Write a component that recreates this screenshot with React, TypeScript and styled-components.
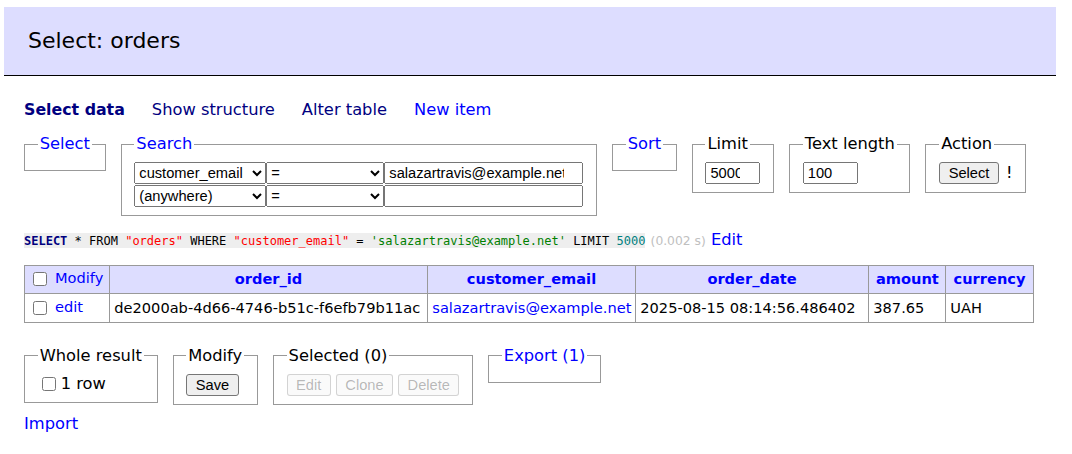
import React from "react";
import styled, { createGlobalStyle } from "styled-components";

const Global = createGlobalStyle`
  html, body { margin: 0; padding: 0; background: #fff; }
  body {
    font-family: "DejaVu Sans", Verdana, sans-serif;
    font-size: 16.3px;
    line-height: 20px;
    color: #000;
  }
`;

const Page = styled.div`
  padding: 7px 16px 20px 24px;
`;

const Title = styled.h2`
  margin: 0 0 24px -20px;
  padding: 19px 24px;
  font-size: 22px;
  line-height: 30px;
  font-weight: normal;
  color: #000;
  background: #ddf;
  border-bottom: 1px solid #000;
`;

const Links = styled.nav`
  display: flex;
  gap: 27px;
  line-height: 20px;
`;

const NavLink = styled.a<{ $active?: boolean; $visited?: boolean }>`
  color: ${(p) => (p.$visited ? "#000080" : "#0000ff")};
  font-weight: ${(p) => (p.$active ? "bold" : "normal")};
  font-size: ${(p) => (p.$active ? "15.8px" : "16.3px")};
  text-decoration: none;
  white-space: nowrap;
`;

const FieldRow = styled.div<{ $top: number }>`
  display: flex;
  align-items: flex-start;
  gap: 15px;
  margin-top: ${(p) => p.$top}px;
`;

const Box = styled.fieldset`
  margin: 0;
  padding: 7.9px 12.7px;
  border: 1px solid #999;
  line-height: 20px;
`;

const Legend = styled.legend<{ $link?: boolean }>`
  padding: 0 2px;
  color: ${(p) => (p.$link ? "#0000ff" : "#000")};
  line-height: 20px;
`;

const SearchGrid = styled.div`
  display: grid;
  grid-template-columns: 132px 118px 199px;
  row-gap: 1px;
`;

const controlFont = `font-family: "Liberation Sans", Arial, sans-serif; font-size: 14.67px;`;

const Select = styled.select`
  ${controlFont}
  box-sizing: border-box;
  width: 100%;
  height: 22px;
  margin: 0;
  color: #000;
`;

const TextInput = styled.input<{ $w?: number }>`
  ${controlFont}
  box-sizing: border-box;
  width: ${(p) => (p.$w ? `${p.$w}px` : "100%")};
  height: 22px;
  margin: 0;
  padding: 1px 3px;
  color: #000;
`;

const Inline = styled.div<{ $gap?: number }>`
  display: flex;
  align-items: center;
  gap: ${(p) => p.$gap ?? 0}px;
  white-space: nowrap;
`;

const Button = styled.button`
  ${controlFont}
  height: 22px;
  padding: 0 8.5px;
  margin: 0;
  color: #000;
  background: #efefef;
  border: 1px solid #767676;
  border-radius: 3px;
  &:disabled {
    color: rgba(16, 16, 16, 0.3);
    background: rgba(239, 239, 239, 0.3);
    border-color: rgba(118, 118, 118, 0.3);
  }
`;

const Bang = styled.span`
  color: #000;
`;

const SqlLine = styled.p`
  margin: 14px 0 0;
  line-height: 20px;
  white-space: nowrap;
`;

const Code = styled.code`
  font-family: "DejaVu Sans Mono", monospace;
  font-size: 12px;
  background: #eee;
  padding: 0.5px 0;
`;

const Tok = styled.span<{ $t: "kw" | "id" | "str" | "num" }>`
  color: ${(p) =>
    p.$t === "kw" ? "#000080" : p.$t === "id" ? "#ff0000" : p.$t === "str" ? "#008000" : "#007f7f"};
  font-weight: ${(p) => (p.$t === "kw" ? "bold" : "normal")};
`;

const Time = styled.span`
  color: #c0c0c0;
  font-size: 12.3px;
`;

const Link = styled.a`
  color: #0000ff;
  text-decoration: none;
`;

const Table = styled.table`
  margin-top: 14px;
  width: 1009px;
  table-layout: fixed;
  border-collapse: collapse;
  font-size: 14.6px;
  line-height: 18px;
`;

const Col = styled.col<{ $w: number }>`
  width: ${(p) => p.$w}px;
`;

const HeadCell = styled.th<{ $left?: boolean }>`
  background: #ddf;
  border: 1px solid #999;
  padding: 2.85px ${(p) => (p.$left ? "4.3px" : "7px")};
  height: 21.3px;
  text-align: ${(p) => (p.$left ? "left" : "center")};
  font-weight: ${(p) => (p.$left ? "normal" : "bold")};
  white-space: nowrap;
  overflow: hidden;
`;

const Cell = styled.td`
  background: #fff;
  border: 1px solid #999;
  padding: 2.85px 4.3px;
  height: 22.3px;
  white-space: nowrap;
  overflow: hidden;
`;

const Check = styled.input<{ $after?: number }>`
  width: 14px;
  height: 14px;
  margin: 3px ${(p) => p.$after ?? 3}px 3px 4px;
  vertical-align: middle;
`;

const CheckLabel = styled.label`
  display: flex;
  align-items: center;
  white-space: nowrap;
`;

const Footer = styled.p`
  margin: 9px 0 0;
  line-height: 20px;
`;

export default function App() {
  return (
    <Page>
      <Global />
      <Title>Select: orders</Title>

      <Links>
        <NavLink href="#" $active $visited>Select data</NavLink>
        <NavLink href="#" $visited>Show structure</NavLink>
        <NavLink href="#" $visited>Alter table</NavLink>
        <NavLink href="#">New item</NavLink>
      </Links>

      <FieldRow $top={14}>
        <Box>
          <Legend $link>Select</Legend>
        </Box>
        <Box>
          <Legend $link>Search</Legend>
          <SearchGrid>
            <Select defaultValue="customer_email">
              <option value="">(anywhere)</option>
              <option value="customer_email">customer_email</option>
            </Select>
            <Select defaultValue="=">
              <option value="=">=</option>
            </Select>
            <TextInput type="search" defaultValue="salazartravis@example.net" />
            <Select defaultValue="">
              <option value="">(anywhere)</option>
              <option value="customer_email">customer_email</option>
            </Select>
            <Select defaultValue="=">
              <option value="=">=</option>
            </Select>
            <TextInput type="search" defaultValue="" />
          </SearchGrid>
        </Box>
        <Box>
          <Legend $link>Sort</Legend>
        </Box>
        <Box>
          <Legend>Limit</Legend>
          <Inline>
            <TextInput type="number" $w={55} defaultValue="5000" />
          </Inline>
        </Box>
        <Box>
          <Legend>Text length</Legend>
          <Inline>
            <TextInput type="number" $w={55} defaultValue="100" />
          </Inline>
        </Box>
        <Box>
          <Legend>Action</Legend>
          <Inline $gap={7}>
            <Button type="button">Select</Button>
            <Bang title="Full table scan">!</Bang>
          </Inline>
        </Box>
      </FieldRow>

      <SqlLine>
        <Code>
          <Tok $t="kw">SELECT</Tok> * FROM <Tok $t="id">"orders"</Tok> WHERE{" "}
          <Tok $t="id">"customer_email"</Tok> = <Tok $t="str">'salazartravis@example.net'</Tok> LIMIT{" "}
          <Tok $t="num">5000</Tok>
        </Code>{" "}
        <Time>(0.002 s)</Time> <Link href="#">Edit</Link>
      </SqlLine>

      <Table>
        <colgroup>
          <Col $w={85} />
          <Col $w={318} />
          <Col $w={208} />
          <Col $w={233} />
          <Col $w={77} />
          <Col $w={88} />
        </colgroup>
        <thead>
          <tr>
            <HeadCell as="td" $left>
              <Check type="checkbox" /> <Link href="#">Modify</Link>
            </HeadCell>
            <HeadCell><Link href="#">order_id</Link></HeadCell>
            <HeadCell><Link href="#">customer_email</Link></HeadCell>
            <HeadCell><Link href="#">order_date</Link></HeadCell>
            <HeadCell><Link href="#">amount</Link></HeadCell>
            <HeadCell><Link href="#">currency</Link></HeadCell>
          </tr>
        </thead>
        <tbody>
          <tr>
            <Cell>
              <Check type="checkbox" /> <Link href="#">edit</Link>
            </Cell>
            <Cell>de2000ab-4d66-4746-b51c-f6efb79b11ac</Cell>
            <Cell><Link href="#">salazartravis@example.net</Link></Cell>
            <Cell>2025-08-15 08:14:56.486402</Cell>
            <Cell>387.65</Cell>
            <Cell>UAH</Cell>
          </tr>
        </tbody>
      </Table>

      <FieldRow $top={23}>
        <Box>
          <Legend>Whole result</Legend>
          <CheckLabel>
            <Check type="checkbox" $after={5} />1 row
          </CheckLabel>
        </Box>
        <Box>
          <Legend>Modify</Legend>
          <Inline>
            <Button type="button">Save</Button>
          </Inline>
        </Box>
        <Box>
          <Legend>Selected (0)</Legend>
          <Inline $gap={5}>
            <Button type="button" disabled>Edit</Button>
            <Button type="button" disabled>Clone</Button>
            <Button type="button" disabled>Delete</Button>
          </Inline>
        </Box>
        <Box>
          <Legend $link>Export (1)</Legend>
        </Box>
      </FieldRow>

      <Footer>
        <Link href="#">Import</Link>
      </Footer>
    </Page>
  );
}
